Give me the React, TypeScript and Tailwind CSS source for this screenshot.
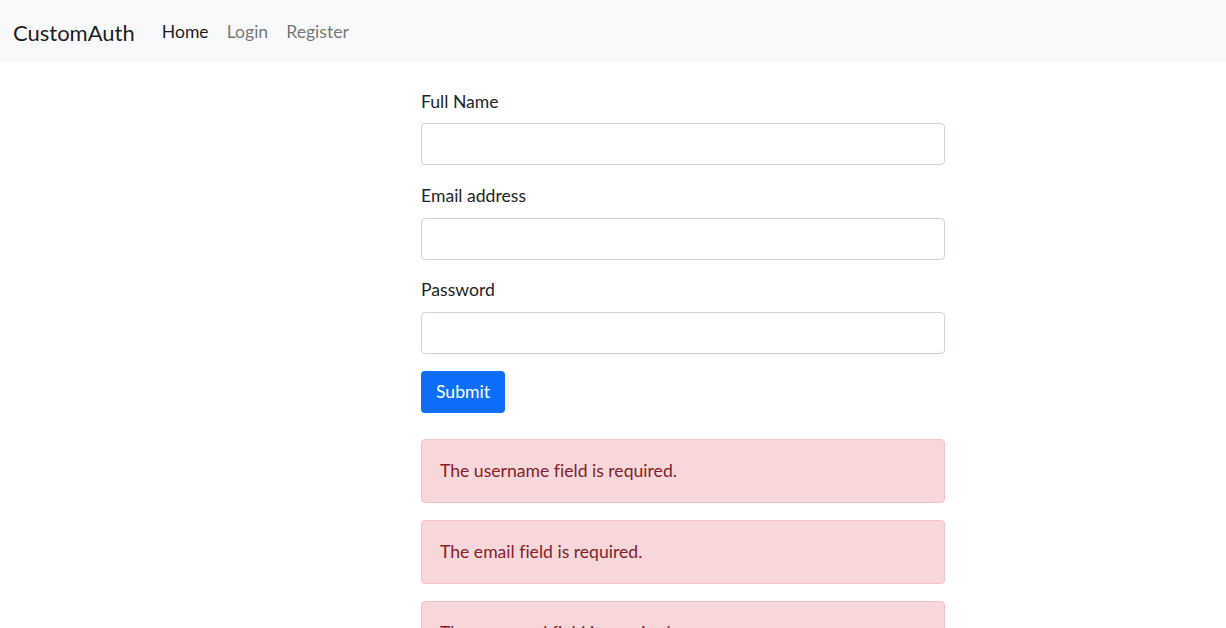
export default function App() {
  const errors = [
    "The username field is required.",
    "The email field is required.",
    "The password field is required.",
  ];

  return (
    <div className="min-h-screen bg-white text-[17.6px] leading-[1.5] text-[#212529] [font-family:Lato,sans-serif] [font-variant-ligatures:none]">
      {/* Navbar */}
      <nav className="flex h-[62px] items-center bg-[#f8f9fa] px-[13px] pt-[2px]">
        <a className="mr-[18px] text-[22px] text-black/90">CustomAuth</a>
        <div className="flex">
          <a className="px-[9px] text-black/90">Home</a>
          <a className="px-[9px] text-black/55">Login</a>
          <a className="px-[9px] text-black/55">Register</a>
        </div>
      </nav>

      <div className="ml-[421px] w-[524px] pt-[27px]">
        <form>
          <div className="mb-[17.6px]">
            <label className="mb-[8px] block">Full Name</label>
            <input className="block h-[42px] w-full rounded-[4px] border border-[#ced4da] px-[13px]" />
          </div>
          <div className="mb-[17.6px]">
            <label className="mb-[8.5px] block">Email address</label>
            <input className="block h-[42px] w-full rounded-[4px] border border-[#ced4da] px-[13px]" />
          </div>
          <div className="mb-[17.6px]">
            <label className="mb-[8px] block">Password</label>
            <input type="password" className="block h-[42px] w-full rounded-[4px] border border-[#ced4da] px-[13px]" />
          </div>
          <button type="button" className="h-[42px] rounded-[4px] bg-[#0d6efd] px-[15px] text-white">
            Submit
          </button>
        </form>

        <div className="mt-[26px]">
          {errors.map((e) => (
            <div
              key={e}
              className="mb-[17.6px] rounded-[4px] border border-[#f5c2c7] bg-[#f8d7da] px-[18px] py-[17.5px] text-[#842029]"
            >
              {e}
            </div>
          ))}
        </div>
      </div>
    </div>
  );
}
